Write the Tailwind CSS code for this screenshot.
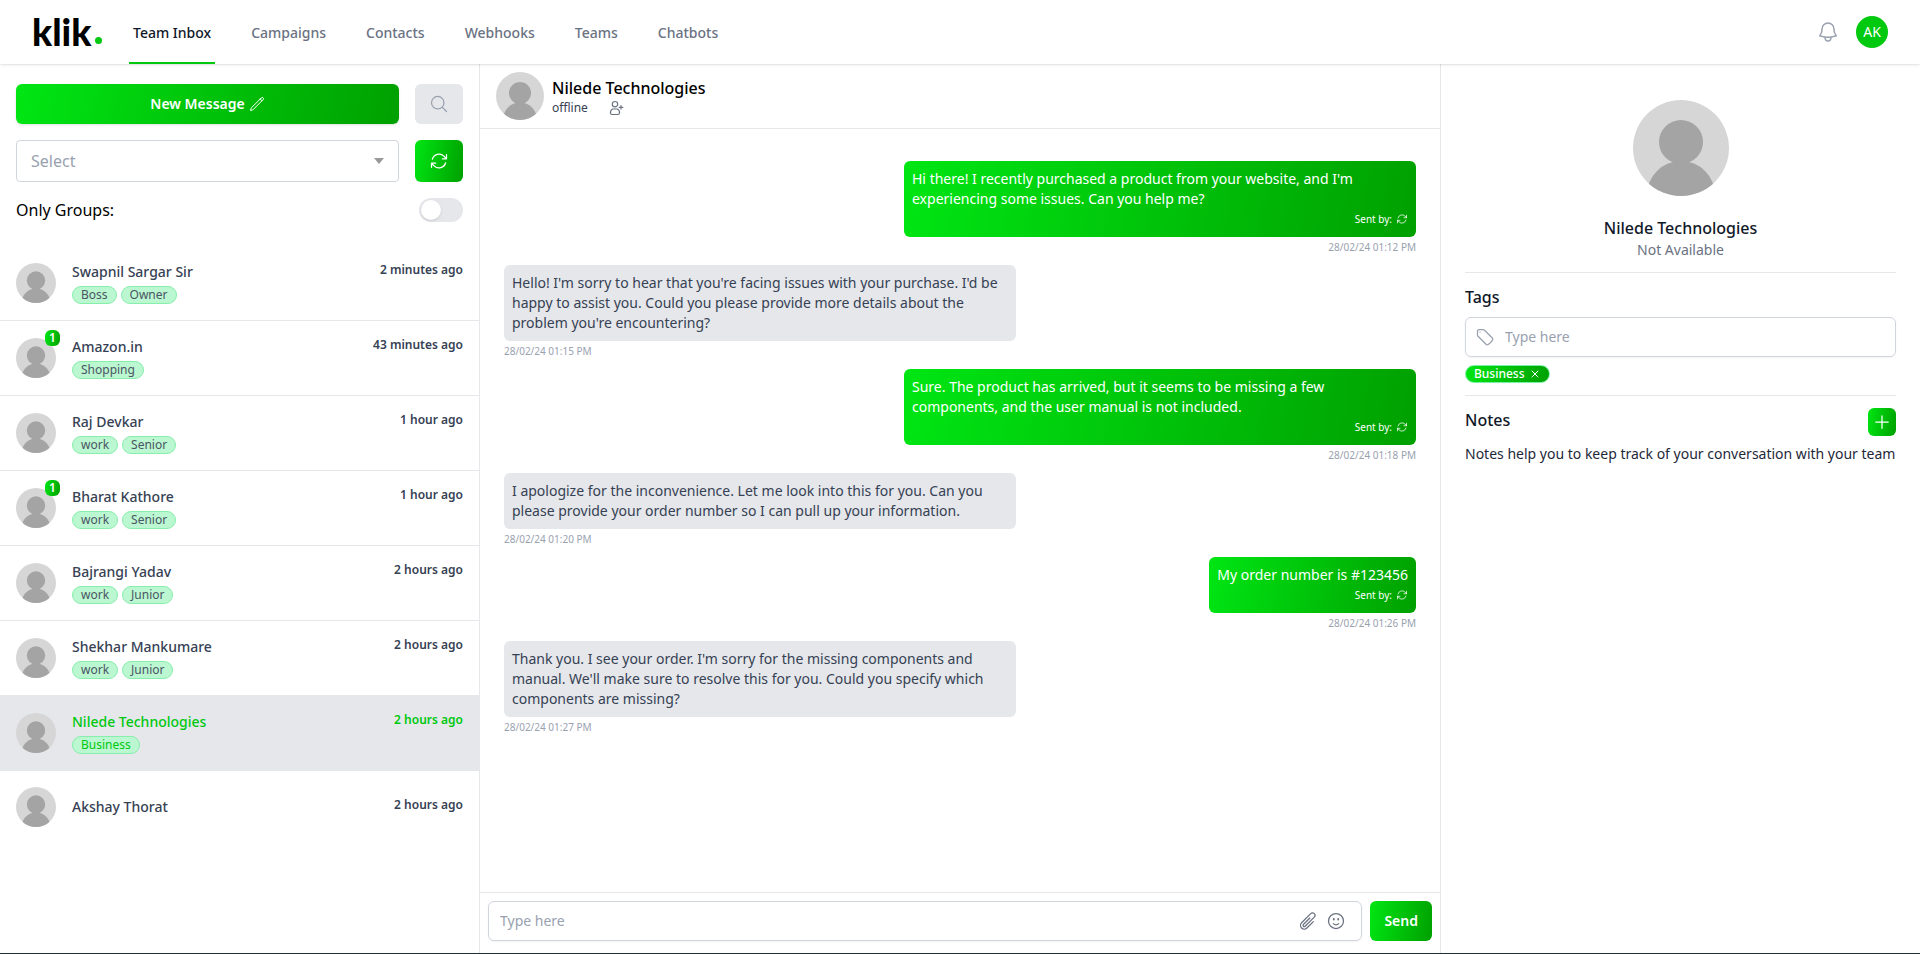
<!DOCTYPE html>
<html lang="en">
<head>
  <meta charset="UTF-8" />
  <meta name="viewport" content="width=device-width, initial-scale=1.0"/>
  <title>Klik - Team Inbox</title>
  <script src="https://cdn.jsdelivr.net/npm/@tailwindcss/browser@4"></script>
  <style>
    body {
      font-family: 'Noto Sans', sans-serif;
    }
    .brand {
      background-image: linear-gradient(100deg, #00e613, #00a000);
    }
    .icon {
      fill: none;
      stroke: currentColor;
      stroke-linecap: round;
      stroke-linejoin: round;
    }
  </style>
</head>
<body class="bg-white">
  <!-- Shared icons -->
  <svg class="hidden" xmlns="http://www.w3.org/2000/svg">
    <symbol id="avatar" viewBox="0 0 96 96">
      <rect width="96" height="96" fill="#d6d6d6"/>
      <circle cx="48" cy="42" r="22" fill="#a4a4a4"/>
      <circle cx="48" cy="95" r="34" fill="#a4a4a4"/>
    </symbol>
    <symbol id="refresh" viewBox="0 0 24 24">
      <path d="M16.023 9.348h4.992v-.001M2.985 19.644v-4.992m0 0h4.992m-4.993 0 3.181 3.183a8.25 8.25 0 0 0 13.803-3.7M4.031 9.865a8.25 8.25 0 0 1 13.803-3.7l3.181 3.182m0-4.991v4.99"/>
    </symbol>
    <symbol id="pencil" viewBox="0 0 24 24">
      <path d="m16.862 4.487 1.687-1.688a1.875 1.875 0 1 1 2.652 2.652L6.832 19.82a4.5 4.5 0 0 1-1.897 1.13l-2.685.8.8-2.685a4.5 4.5 0 0 1 1.13-1.897L16.863 4.487Zm0 0L19.5 7.125"/>
    </symbol>
    <symbol id="search" viewBox="0 0 24 24">
      <path d="m21 21-5.197-5.197m0 0A7.5 7.5 0 1 0 5.196 5.196a7.5 7.5 0 0 0 10.607 10.607Z"/>
    </symbol>
    <symbol id="bell" viewBox="0 0 24 24">
      <path d="M14.857 17.082a23.848 23.848 0 0 0 5.454-1.31A8.967 8.967 0 0 1 18 9.75V9A6 6 0 0 0 6 9v.75a8.967 8.967 0 0 1-2.312 6.022c1.733.64 3.56 1.085 5.455 1.31m5.714 0a24.255 24.255 0 0 1-5.714 0m5.714 0a3 3 0 1 1-5.714 0"/>
    </symbol>
    <symbol id="user-plus" viewBox="0 0 16 16">
      <circle cx="7" cy="4.200" r="2.700"/>
      <path d="M4.500 9h5c1.500 1 2.300 2.500 2 4.200-.1.800-.6 1.300-1.500 1.300H4c-.9 0-1.400-.5-1.500-1.300C2.200 11.500 3 10 4.500 9ZM13 5.500v3.600M11.200 7.300h3.600"/>
    </symbol>
    <symbol id="clip" viewBox="0 0 24 24">
      <path d="m18.375 12.739-7.693 7.693a4.5 4.5 0 0 1-6.364-6.364l10.940-10.940A3 3 0 1 1 19.500 7.372L8.552 18.320m.009-.010-.010.010m5.699-9.941-7.810 7.810a1.500 1.500 0 0 0 2.112 2.130"/>
    </symbol>
    <symbol id="smile" viewBox="0 0 24 24">
      <path d="M15.182 15.182a4.500 4.500 0 0 1-6.364 0M21 12a9 9 0 1 1-18 0 9 9 0 0 1 18 0ZM9.750 9.750c0 .414-.168.750-.375.750S9 10.164 9 9.750 9.168 9 9.375 9s.375.336.375.750Zm-.375 0h.008v.015h-.008V9.750Zm5.625 0c0 .414-.168.750-.375.750s-.375-.336-.375-.750.168-.750.375-.750.375.336.375.750Zm-.375 0h.008v.015h-.008V9.750Z"/>
    </symbol>
    <symbol id="tag" viewBox="0 0 24 24">
      <path d="M9.568 3H5.250A2.250 2.250 0 0 0 3 5.250v4.318c0 .597.237 1.170.659 1.591l9.581 9.581c.699.699 1.780.872 2.607.330a18.095 18.095 0 0 0 5.223-5.223c.542-.827.369-1.908-.330-2.607L11.160 3.660A2.250 2.250 0 0 0 9.568 3Z"/>
      <path d="M6 6h.008v.008H6V6Z"/>
    </symbol>
    <symbol id="plus" viewBox="0 0 24 24"><path d="M12 4.500v15m7.500-7.500h-15"/></symbol>
    <symbol id="close" viewBox="0 0 24 24"><path d="M6 18 18 6M6 6l12 12"/></symbol>
  </svg>

  <div class="flex min-h-screen flex-col">
    <header class="relative flex h-16 items-center justify-between bg-white px-8 shadow">
      <div class="flex h-full items-center">
        <a href="#" class="mr-6 flex w-[73px] items-end gap-1 text-black" aria-label="klik">
          <span class="font-[Lato] text-[37px] leading-10 font-black">klik</span>
          <span class="mb-2 size-[7px] shrink-0 rounded-full bg-[#00c90f]"></span>
        </a>
        <nav class="flex h-full gap-8 text-sm font-medium text-gray-500">
          <a href="#" class="flex items-center border-b-2 border-[#00c90f] px-1 pt-1 text-gray-900">Team Inbox</a>
          <a href="#" class="flex items-center border-b-2 border-transparent px-1 pt-1">Campaigns</a>
          <a href="#" class="flex items-center border-b-2 border-transparent px-1 pt-1">Contacts</a>
          <a href="#" class="flex items-center border-b-2 border-transparent px-1 pt-1">Webhooks</a>
          <a href="#" class="flex items-center border-b-2 border-transparent px-1 pt-1">Teams</a>
          <a href="#" class="flex items-center border-b-2 border-transparent px-1 pt-1">Chatbots</a>
        </nav>
      </div>
      <div class="flex items-center gap-4">
        <button type="button" aria-label="Notifications" class="text-gray-400">
          <svg class="icon size-6" stroke-width="1.5"><use href="#bell"/></svg>
        </button>
        <button type="button" class="size-8 rounded-full bg-[#00c90f] text-sm text-white">AK</button>
      </div>
    </header>

    <main class="grid flex-1 grid-cols-[1fr_2fr_1fr]">
      <!-- Conversations -->
      <aside class="border-r border-gray-200 pt-5">
        <div class="flex flex-col gap-4 px-4 pb-6">
          <div class="flex gap-4">
            <button type="button" class="brand flex h-10 flex-1 items-center justify-center gap-1 rounded-md text-sm font-semibold text-white shadow-sm">
              New Message
              <svg class="icon size-4" stroke-width="1.5"><use href="#pencil"/></svg>
            </button>
            <button type="button" aria-label="Search" class="flex h-10 w-12 items-center justify-center rounded-md bg-gray-200 text-gray-400">
              <svg class="icon size-5" stroke-width="1.5"><use href="#search"/></svg>
            </button>
          </div>
          <div class="flex gap-4">
            <div class="relative flex-1">
              <select aria-label="Filter" class="h-[42px] w-full appearance-none rounded border border-gray-300 bg-white px-[14px] text-base text-gray-400">
                <option>Select</option>
              </select>
              <svg class="pointer-events-none absolute top-[18px] right-[15px] h-[6px] w-[10px]" viewBox="0 0 10 6" fill="#999999"><path d="M0 0h10L5 6Z"/></svg>
            </div>
            <button type="button" aria-label="Refresh" class="brand flex w-12 items-center justify-center rounded-md text-white">
              <svg class="icon size-5" stroke-width="1.5"><use href="#refresh"/></svg>
            </button>
          </div>
          <label class="flex items-center justify-between text-base leading-6 text-black">
            Only Groups:
            <input type="checkbox" class="h-6 w-11 appearance-none rounded-full bg-gray-200 p-[2px] before:block before:size-5 before:rounded-full before:bg-white before:shadow-sm checked:bg-green-500 checked:before:translate-x-5" />
          </label>
        </div>
        <ul id="contacts"></ul>
      </aside>

      <!-- Chat -->
      <section class="flex flex-col">
        <div class="flex h-[65px] items-center gap-2 border-b border-gray-200 px-4">
          <svg class="size-12 rounded-full"><use href="#avatar"/></svg>
          <div>
            <h2 class="text-base leading-6 font-medium text-black">Nilede Technologies</h2>
            <div class="flex items-center gap-5 text-xs leading-4 text-gray-700">
              offline
              <button type="button" aria-label="Assign user" class="text-gray-500">
                <svg class="icon size-4" stroke-width="1.2"><use href="#user-plus"/></svg>
              </button>
            </div>
          </div>
        </div>
        <ol id="messages" class="flex flex-1 flex-col gap-2 px-6 pt-8"></ol>
        <form class="flex gap-2 border-t border-gray-200 px-2 pt-2 pb-3">
          <div class="flex h-10 flex-1 items-center gap-2 rounded-md border border-gray-300 pr-[15px] pl-[11px] text-gray-500 shadow-xs">
            <input type="text" aria-label="Message" placeholder="Type here" class="min-w-0 flex-1 text-sm outline-none placeholder:text-gray-400" />
            <button type="button" aria-label="Attach file"><svg class="icon size-5" stroke-width="1.5"><use href="#clip"/></svg></button>
            <button type="button" aria-label="Emoji"><svg class="icon size-5" stroke-width="1.5"><use href="#smile"/></svg></button>
          </div>
          <button type="button" class="brand h-10 rounded-md px-[14px] text-sm font-semibold text-white">Send</button>
        </form>
      </section>

      <!-- Contact details -->
      <aside class="border-l border-gray-200 px-6 pt-9">
        <div class="flex flex-col items-center border-b border-gray-200 pb-3">
          <svg class="size-24 rounded-full"><use href="#avatar"/></svg>
          <h2 class="mt-5 text-base leading-6 font-medium text-gray-900">Nilede Technologies</h2>
          <p class="text-sm leading-5 text-gray-500">Not Available</p>
        </div>
        <div class="border-b border-gray-200 py-3">
          <label for="tags" class="block text-base leading-6 font-medium text-gray-900">Tags</label>
          <div class="mt-2 flex h-10 items-center gap-2 rounded-md border border-gray-300 px-[9px] text-gray-400 shadow-xs">
            <svg class="icon size-5" stroke-width="1.5"><use href="#tag"/></svg>
            <input id="tags" type="text" placeholder="Type here" class="min-w-0 flex-1 px-[2px] text-sm outline-none placeholder:text-gray-400" />
          </div>
          <div class="mt-2 flex">
            <span class="brand flex h-[18px] items-center gap-1 rounded-full border border-green-300 px-2 text-xs leading-4 font-medium text-white">
              Business
              <button type="button" aria-label="Remove tag"><svg class="icon size-3" stroke-width="2"><use href="#close"/></svg></button>
            </span>
          </div>
        </div>
        <div class="pt-3">
          <div class="flex items-start justify-between">
            <h3 class="text-base leading-6 font-medium text-gray-900">Notes</h3>
            <button type="button" aria-label="Add note" class="brand flex size-7 items-center justify-center rounded-md text-white">
              <svg class="icon size-5" stroke-width="1.5"><use href="#plus"/></svg>
            </button>
          </div>
          <p class="mt-2 text-sm leading-5 text-gray-800">Notes help you to keep track of your conversation with your team</p>
        </div>
      </aside>
    </main>
    <div class="h-px bg-[#1f2f38]"></div>
  </div>

  <script>
    const contacts = [
      { name: 'Swapnil Sargar Sir', time: '2 minutes ago', tags: ['Boss', 'Owner'] },
      { name: 'Amazon.in', time: '43 minutes ago', tags: ['Shopping'], unread: 1 },
      { name: 'Raj Devkar', time: '1 hour ago', tags: ['work', 'Senior'] },
      { name: 'Bharat Kathore', time: '1 hour ago', tags: ['work', 'Senior'], unread: 1 },
      { name: 'Bajrangi Yadav', time: '2 hours ago', tags: ['work', 'Junior'] },
      { name: 'Shekhar Mankumare', time: '2 hours ago', tags: ['work', 'Junior'] },
      { name: 'Nilede Technologies', time: '2 hours ago', tags: ['Business'], active: true },
      { name: 'Akshay Thorat', time: '2 hours ago', tags: [] },
    ];

    const messages = [
      { sent: true, time: '28/02/24 01:12 PM', text: "Hi there! I recently purchased a product from your website, and I'm experiencing some issues. Can you help me?" },
      { sent: false, time: '28/02/24 01:15 PM', text: "Hello! I'm sorry to hear that you're facing issues with your purchase. I'd be happy to assist you. Could you please provide more details about the problem you're encountering?" },
      { sent: true, time: '28/02/24 01:18 PM', text: 'Sure. The product has arrived, but it seems to be missing a few components, and the user manual is not included.' },
      { sent: false, time: '28/02/24 01:20 PM', text: 'I apologize for the inconvenience. Let me look into this for you. Can you please provide your order number so I can pull up your information.' },
      { sent: true, time: '28/02/24 01:26 PM', text: 'My order number is #123456' },
      { sent: false, time: '28/02/24 01:27 PM', text: "Thank you. I see your order. I'm sorry for the missing components and manual. We'll make sure to resolve this for you. Could you specify which components are missing?" },
    ];

    document.getElementById('contacts').innerHTML = contacts.map((c) => `
      <li class="flex items-center gap-4 border-b border-gray-200 px-4 py-4 last:border-b-0 ${c.active ? 'bg-gray-200 text-[#00c90f]' : 'text-gray-700'}">
        <div class="relative">
          <svg class="size-10 rounded-full"><use href="#avatar"/></svg>
          ${c.unread ? `<span class="brand absolute -top-2 -right-1 flex h-4 w-[15px] items-center justify-center rounded-md text-xs font-semibold text-white">${c.unread}</span>` : ''}
        </div>
        <div class="flex flex-1 items-start justify-between">
          <div>
            <p class="text-sm leading-5 font-medium">${c.name}</p>
            ${c.tags.length ? `<div class="mt-1 flex gap-1">${c.tags.map((t) => `<span class="rounded-full border border-[#86efac] bg-[#bbf7d0] px-2 text-xs leading-4 ${c.active ? '' : 'text-gray-600'}">${t}</span>`).join('')}</div>` : ''}
          </div>
          <time class="text-xs leading-4 font-semibold">${c.time}</time>
        </div>
      </li>`).join('');

    document.getElementById('messages').innerHTML = messages.map((m) => `
      <li class="flex flex-col ${m.sent ? 'items-end' : 'items-start'}">
        <div class="max-w-lg rounded-md p-2 text-sm leading-5 ${m.sent ? 'brand text-white' : 'bg-gray-200 text-gray-700'}">
          <p>${m.text}</p>
          ${m.sent ? '<p class="flex items-center justify-end gap-1 text-[10px] leading-5">Sent by: <svg class="icon size-3" stroke-width="1.5"><use href="#refresh"/></svg></p>' : ''}
        </div>
        <time class="text-[10px] leading-5 text-gray-400">${m.time}</time>
      </li>`).join('');
  </script>
</body>
</html>
